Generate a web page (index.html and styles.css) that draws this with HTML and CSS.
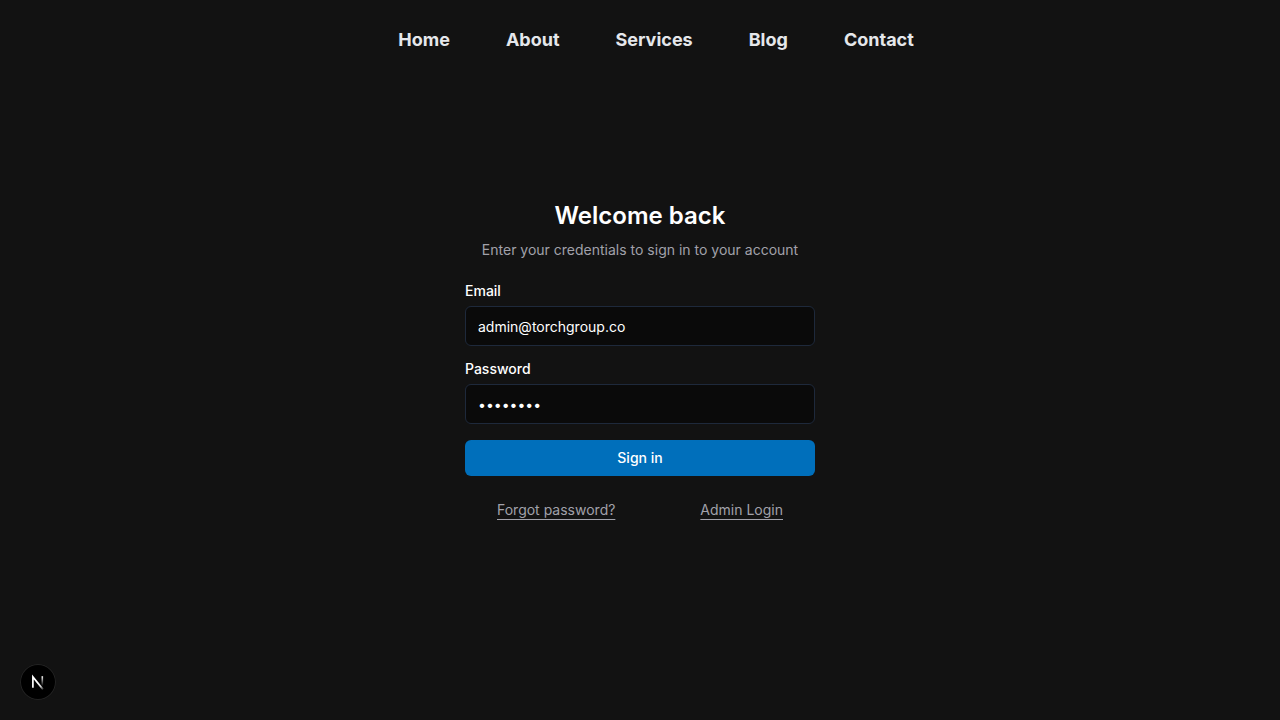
FILE: index.html
```html
<!DOCTYPE html>
<html lang="en">
<head>
  <meta charset="utf-8">
  <meta name="viewport" content="width=device-width, initial-scale=1">
  <title>Sign in</title>
  <link rel="stylesheet" href="styles.css">
</head>
<body class="page">
  <header class="site-header">
    <nav aria-label="Main">
      <ul class="nav-list">
        <li><a class="nav-link" href="#home">Home</a></li>
        <li><a class="nav-link" href="#about">About</a></li>
        <li><a class="nav-link" href="#services">Services</a></li>
        <li><a class="nav-link" href="#blog">Blog</a></li>
        <li><a class="nav-link" href="#contact">Contact</a></li>
      </ul>
    </nav>
  </header>

  <main class="login">
    <div class="intro">
      <h1 class="title">Welcome back</h1>
      <p class="subtitle">Enter your credentials to sign in to your account</p>
    </div>
    <form class="form">
      <div class="field">
        <label class="label" for="email">Email</label>
        <input class="input" id="email" type="email" value="admin@torchgroup.co" autocomplete="email">
      </div>
      <div class="field">
        <label class="label" for="password">Password</label>
        <input class="input" id="password" type="password" value="password" autocomplete="current-password">
      </div>
      <button class="submit" type="submit">Sign in</button>
    </form>
    <div class="links">
      <a class="link" href="#forgot">Forgot password?</a>
      <a class="link" href="#admin">Admin Login</a>
    </div>
  </main>

  <button class="dev-badge" type="button" aria-label="Open Next.js Dev Tools">
    <svg class="dev-icon" viewBox="0 0 36 36" fill="none" aria-hidden="true">
      <defs>
        <linearGradient id="diagonal" gradientUnits="userSpaceOnUse" x1="18" y1="18" x2="24" y2="26">
          <stop stop-color="#fff"/>
          <stop offset="0.5" stop-color="#fff" stop-opacity="0.85"/>
          <stop offset="1" stop-color="#fff" stop-opacity="0"/>
        </linearGradient>
        <linearGradient id="stem" gradientUnits="userSpaceOnUse" x1="22" y1="12" x2="22" y2="22">
          <stop stop-color="#fff"/>
          <stop offset="1" stop-color="#fff" stop-opacity="0"/>
        </linearGradient>
      </defs>
      <path d="M12.9 23.8V13L23 25.4" stroke="url(#diagonal)" stroke-width="1.7"/>
      <path d="M22.3 12.2V22.5" stroke="url(#stem)" stroke-width="1.6"/>
    </svg>
  </button>
</body>
</html>
```
FILE: styles.css
```css
* {
  box-sizing: border-box;
}

.page {
  margin: 0;
  min-height: 100vh;
  display: grid;
  grid-template-rows: 80px 1fr 80px;
  background: #121212;
  color: #fff;
  font-family: Inter, "Liberation Sans", sans-serif;
  font-size: 14px;
  line-height: 20px;
}

.site-header {
  display: flex;
  align-items: center;
  justify-content: center;
  padding-left: 32px;
}

.nav-list {
  display: flex;
  gap: 56px;
  margin: 0;
  padding: 0;
  list-style: none;
}

.nav-link {
  color: #e5e7eb;
  font-size: 18px;
  font-weight: 700;
  line-height: 28px;
  text-decoration: none;
}

.login {
  display: flex;
  flex-direction: column;
  gap: 24px;
  width: 100%;
  max-width: 350px;
  margin: auto;
}

.intro {
  display: flex;
  flex-direction: column;
  gap: 8px;
  text-align: center;
}

.title {
  margin: 0;
  font-size: 24px;
  font-weight: 600;
  line-height: 32px;
}

.subtitle {
  margin: 0;
  color: #a1a1aa;
}

.form {
  display: grid;
  gap: 16px;
}

.field {
  display: grid;
  gap: 8px;
}

.label {
  font-weight: 500;
  line-height: 14px;
}

.input {
  width: 100%;
  height: 40px;
  padding: 8px 12px;
  border: 1px solid #1e293b;
  border-radius: 6px;
  background: #0a0a0a;
  color: #fff;
  font: inherit;
}

.submit {
  height: 36px;
  border: 0;
  border-radius: 6px;
  background: #006fbb;
  color: #fff;
  font: inherit;
  font-weight: 500;
}

.links {
  display: flex;
  justify-content: space-between;
  padding: 0 32px;
}

.link {
  color: #a1a1aa;
  text-decoration: underline;
  text-underline-offset: 4px;
}

.dev-badge {
  position: fixed;
  left: 20px;
  bottom: 20px;
  display: block;
  width: 36px;
  height: 36px;
  padding: 0;
  border: 0;
  border-radius: 50%;
  background: #000;
  box-shadow: inset 0 0 0 1px #232323;
}

.dev-icon {
  display: block;
  width: 100%;
  height: 100%;
}
```
